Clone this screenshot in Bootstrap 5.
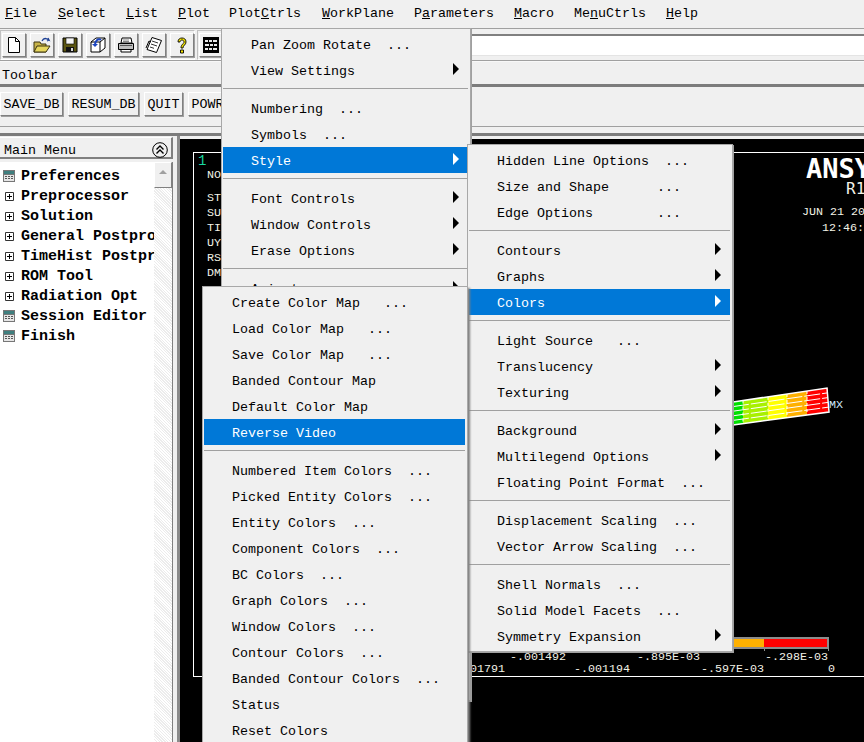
<!DOCTYPE html>
<html lang="en">
<head>
  <meta charset="UTF-8" />
  <meta name="viewport" content="width=device-width, initial-scale=1.0" />
  <title>ANSYS Main Window</title>
  <link href="https://cdn.jsdelivr.net/npm/bootstrap@5.3.0/dist/css/bootstrap.min.css" rel="stylesheet" />
  <script src="https://cdn.jsdelivr.net/npm/bootstrap@5.3.0/dist/js/bootstrap.bundle.min.js"></script>

  <style>
    html, body { margin: 0; height: 742px; overflow: hidden; background: #f0f0f0; }

    .app {
      position: relative;
      width: 864px;
      height: 742px;
      overflow: hidden;
      background: #f0f0f0;
      color: #000;
      font: 13.33px/1 "Liberation Mono", monospace;
    }

    /* Menu bar */
    .menu-strip { height: 29px; flex: none; border-bottom: 1px solid #a0a0a0; }
    .menu-strip span { position: absolute; top: 7px; white-space: pre; }

    /* Icon toolbar */
    .tool-strip { height: 32px; flex: none; padding-top: 1px; border-bottom: 1px solid #a0a0a0; }
    .tool-group {
      height: 30px;
      padding: 2px 0 0 1px;
      border: 1px solid #c0c0c0;
      border-right-color: #fff;
      border-bottom-color: #fff;
      gap: 4px;
      margin-right: 2px;
    }
    .tool-btn {
      width: 24px;
      height: 24px;
      padding: 0;
      border-radius: 0;
      background: #f0f0f0;
      border: 1px solid;
      border-color: #fff #808080 #808080 #fff;
      box-shadow: 1px 1px 0 #a0a0a0;
    }
    .command-box {
      margin: 4px 0 0 0;
      height: 22px;
      background: #fff;
      border-top: 2px solid #808080;
      border-bottom: 1px solid #e4e4e4;
    }

    .toolbar-title {
      height: 26px;
      flex: none;
      padding: 7px 0 0 2px;
      border-top: 1px solid #f8f8f8;
      border-bottom: 3px solid #7c7c7c;
    }

    /* Abbreviation buttons */
    .abbr-strip { height: 40px; flex: none; padding: 5px 0 0 0; gap: 5px; border-bottom: 1px solid #a0a0a0; }
    .abbr-btn {
      height: 24px;
      padding: 1px 2.5px 0;
      border-radius: 0;
      font: inherit;
      color: #000;
      background: #f0f0f0;
      border: 1px solid;
      border-color: #fff #808080 #808080 #fff;
      box-shadow: 1px 1px 0 #a0a0a0;
      white-space: nowrap;
    }
    .abbr-btn:hover { background: #f0f0f0; color: #000; }

    .work-area { flex: 1; min-height: 0; border-top: 3px solid #7c7c7c; margin-top: 6px; }

    /* Main menu tree */
    .side-panel { width: 180px; flex: none; border-right: 3px solid #8a8a8a; padding-right: 4px; }
    .side-head {
      height: 22px;
      margin-top: 1px;
      padding: 6px 0 0 4px;
      width: 173px;
      border-right: 2px solid #808080;
      border-bottom: 2px solid #808080;
      border-top: 1px solid #fff;
    }
    .collapse-knob {
      position: absolute;
      left: 152px;
      top: 4px;
      width: 16px;
      height: 16px;
    }
    .tree-box {
      width: 173px;
      height: 582px;
      margin-top: 3px;
      background: #fff;
      border-right: 1px solid #808080;
    }
    .tree-list { width: 154px; padding-top: 5px; overflow: hidden; }
    .tree-list .list-group-item {
      height: 20px;
      padding: 0;
      border: 0;
      background: transparent;
      font: bold 15px/20px "Liberation Mono", monospace;
      color: #000;
      white-space: nowrap;
      overflow: hidden;
    }
    .tree-ico { width: 21px; flex: none; padding-left: 3px; }
    .plus-ico { padding-left: 5px; }
    .tree-track {
      width: 18px;
      flex: none;
      background-color: #f6f6f6;
      background-image: repeating-linear-gradient(45deg, #fff 0 1px, #ececec 1px 2px);
    }
    .track-up {
      height: 26px;
      background: #f0f0f0;
      border: 1px solid;
      border-color: #fff #808080 #808080 #fff;
    }
    .track-up i {
      display: block;
      width: 0;
      margin: 7px auto 0;
      border: 4px solid transparent;
      border-top: 0;
      border-bottom: 4px solid #a0a0a0;
    }

    /* Graphics window */
    .plot-canvas {
      position: relative;
      flex: 1;
      margin-top: 3px;
      background: #000;
      color: #f2f2e6;
      overflow: hidden;
    }
    .plot-frame {
      position: absolute;
      left: 13px;
      top: 13px;
      width: 720px;
      height: 525px;
      border: 1px solid #fff;
    }
    .plot-text { position: absolute; white-space: pre; font-size: 11.67px; }
    .brand-name { left: 626px; top: 16px; font: bold 27px/1 "DejaVu Sans Mono", monospace; color: #fff; }
    .brand-rel { left: 666px; top: 42px; font: 16px/1 "DejaVu Sans Mono", monospace; }
    .plot-legend-bar {
      position: absolute;
      left: 553px;
      top: 498px;
      width: 96px;
      height: 12px;
      border: solid #8c8c8c;
      border-width: 2px 2px 2px 0;
      background: linear-gradient(to right, #ffb000 0 31px, #f00 31px);
    }
    .plot-legend-bar::after {
      content: "";
      position: absolute;
      left: 31px;
      right: -2px;
      top: 10px;
      height: 2px;
      border: solid #8c8c8c;
      border-width: 0 1px;
    }

    /* Pop-up menus */
    .pop-menu {
      --bs-dropdown-link-active-bg: #0078d7;
      --bs-dropdown-link-active-color: #fff;
      --bs-dropdown-link-color: #000;
      --bs-dropdown-link-hover-bg: #f0f0f0;
      position: absolute;
      margin: 0;
      padding: 2px 2px 2px 1px;
      min-width: 0;
      font: inherit;
      color: #000;
      background: #f0f0f0;
      border: 1px solid #a8a8a8;
      border-radius: 0;
      box-shadow: 1px 1px 0 #a0a0a0;
      overflow: hidden;
    }
    .menu-plot { left: 221px; top: 28px; width: 250px; height: 673px; z-index: 1; }
    .menu-style { left: 467px; top: 144px; width: 266px; height: 508px; z-index: 2; }
    .menu-colors { left: 202px; top: 286px; width: 266px; height: 470px; z-index: 3; box-shadow: 2px 2px 2px #808080; }
    .pop-menu .dropdown-item {
      height: 26px;
      padding: 3px 9px 0 28px;
      white-space: pre;
      border-radius: 0;
    }
    .pop-menu .dropdown-divider {
      margin: 5px 0 6px;
      height: 0;
      opacity: 1;
      border-top: 1px solid #a0a0a0;
    }
    .sub-arrow {
      margin-left: auto;
      margin-top: -6px;
      width: 0;
      height: 0;
      border-style: solid;
      border-width: 6px 0 6px 6px;
      border-color: transparent transparent transparent #000;
    }
    .dropdown-item.active .sub-arrow { border-left-color: #fff; }
  </style>
</head>
<body>

<div class="app d-flex flex-column">
  <!-- Menu bar -->
  <div class="menu-strip">
    <span style="left:5px"><u>F</u>ile</span>
    <span style="left:58px"><u>S</u>elect</span>
    <span style="left:126px"><u>L</u>ist</span>
    <span style="left:178px"><u>P</u>lot</span>
    <span style="left:229px">Plot<u>C</u>trls</span>
    <span style="left:322px"><u>W</u>orkPlane</span>
    <span style="left:414px">P<u>a</u>rameters</span>
    <span style="left:514px"><u>M</u>acro</span>
    <span style="left:574px">Me<u>n</u>uCtrls</span>
    <span style="left:666px"><u>H</u>elp</span>
  </div>

  <!-- Icon toolbar -->
  <div class="tool-strip d-flex">
    <div class="tool-group d-flex">
      <button class="tool-btn btn d-flex align-items-center justify-content-center">
        <svg width="14" height="18" viewBox="0 0 14 18"><path d="M1.5 1.5h7l4 4v11h-11z" fill="#fff" stroke="#000"/><path d="M8.5 1.5v4h4" fill="none" stroke="#000"/></svg>
      </button>
      <button class="tool-btn btn d-flex align-items-center justify-content-center">
        <svg width="18" height="16" viewBox="0 0 18 16"><path d="M1 5h6l1 2h5v8H1z" fill="#c8b44a" stroke="#3c3410"/><path d="M1 15l3-6h13l-4 6z" fill="#e6d65e" stroke="#3c3410"/><path d="M9 4c1-2 3-3 5-2l2 1-1-2m1 2-2 1" fill="none" stroke="#1c3f94" stroke-width="1.3"/></svg>
      </button>
      <button class="tool-btn btn d-flex align-items-center justify-content-center">
        <svg width="16" height="16" viewBox="0 0 16 16"><path d="M1 1h14v14H1z" fill="#5a5410" stroke="#000"/><path d="M4 1h8v6H4z" fill="#f4f4f4" stroke="#000" stroke-width=".6"/><path d="M4 10h8v5H4z" fill="#111"/><path d="M9 11h2v3H9z" fill="#d8d8d8"/></svg>
      </button>
      <button class="tool-btn btn d-flex align-items-center justify-content-center">
        <svg width="18" height="18" viewBox="0 0 18 18"><path d="M2 6l5-4h9v10l-5 4H2z" fill="#fff" stroke="#000"/><path d="M2 6h9v10M11 6l5-4" fill="none" stroke="#000"/><path d="M6 9c0-4 3-7 6-5" fill="none" stroke="#1c45c0" stroke-width="2"/><path d="M3 8l3 3 3-3" fill="#1c45c0"/></svg>
      </button>
      <button class="tool-btn btn d-flex align-items-center justify-content-center">
        <svg width="18" height="16" viewBox="0 0 18 16"><path d="M5 1h9l1 5H4z" fill="#fff" stroke="#000"/><path d="M1.500 6.500h15v6h-15z" fill="#bdbdbd" stroke="#000"/><path d="M4 12.500h10v2.500H4z" fill="#fff" stroke="#000"/><path d="M3 8.500h12" stroke="#555"/><path d="M6 3h6M6 4.500h6" stroke="#555" stroke-width=".7"/></svg>
      </button>
      <button class="tool-btn btn d-flex align-items-center justify-content-center">
        <svg width="18" height="18" viewBox="0 0 18 18"><path d="M7 1.500l9.500 3-5 12-9.500-3z" fill="#fff" stroke="#000"/><path d="M7 5l6 2M6 8l6 2M5 11l4 1.300" stroke="#333"/><path d="M1 12l3-7 2 1" fill="none" stroke="#000"/></svg>
      </button>
      <button class="tool-btn btn d-flex align-items-center justify-content-center">
        <svg width="12" height="17" viewBox="0 0 12 17"><path d="M2 5c0-3 2-4 4-4s4 1 4 4-3 3-3 6H5c0-4 3-4 3-6 0-1-1-2-2-2S4 4 4 5z" fill="#f4e400" stroke="#000" stroke-width=".9"/><path d="M4.500 13h3v3h-3z" fill="#f4e400" stroke="#000" stroke-width=".9"/></svg>
      </button>
    </div>
    <div class="tool-group d-flex">
      <button class="tool-btn btn d-flex align-items-center justify-content-center">
        <svg width="16" height="16" viewBox="0 0 16 16"><path d="M0 0h16v16H0z"/><path d="M2 3h3v2H2zM6 3h3v2H6zM10 3h4v2h-4zM2 7h4v2H2zM7 7h3v2H7zM11 7h3v2h-3zM2 11h3v2H2zM6 11h3v2H6zM10 11h4v2h-4z" fill="#e8e8e8"/></svg>
      </button>
    </div>
    <div class="command-box flex-grow-1"></div>
  </div>

  <div class="toolbar-title">Toolbar</div>

  <!-- Abbreviation buttons -->
  <div class="abbr-strip d-flex align-items-start">
    <button class="abbr-btn btn">SAVE_DB</button>
    <button class="abbr-btn btn">RESUM_DB</button>
    <button class="abbr-btn btn">QUIT</button>
    <button class="abbr-btn btn">POWRGRPH</button>
  </div>

  <div class="work-area d-flex">
    <!-- Main menu tree -->
    <div class="side-panel">
      <div class="side-head position-relative">
        Main Menu
        <svg class="collapse-knob" viewBox="0 0 16 16"><circle cx="8" cy="8" r="7.300" fill="#f0f0f0" stroke="#000"/><path d="M4.500 7.500L8 4l3.500 3.500M4.500 11.500L8 8l3.500 3.500" fill="none" stroke="#000" stroke-width="1.400"/></svg>
      </div>
      <div class="tree-box d-flex">
        <div class="tree-list list-group list-group-flush">
          <div class="list-group-item d-flex align-items-center"><span class="tree-ico"><svg width="12" height="12" viewBox="0 0 12 12"><path d="M0 0h12v12H0z" fill="#777"/><path d="M1 1h10v3H1z" fill="#3f7f7f"/><path d="M1 5h10v6H1z" fill="#e6e6e6"/><path d="M2 6h2v1H2zM5 6h2v1H5zM8 6h2v1H8zM2 8h2v1H2zM5 8h2v1H5zM8 8h2v1H8z" fill="#555"/></svg></span>Preferences</div>
          <div class="list-group-item d-flex align-items-center"><span class="tree-ico plus-ico"><svg width="9" height="9" viewBox="0 0 9 9"><path d="M.5.500h8v8h-8z" fill="#fff" stroke="#333"/><path d="M2 4.500h5M4.500 2v5" stroke="#000"/></svg></span>Preprocessor</div>
          <div class="list-group-item d-flex align-items-center"><span class="tree-ico plus-ico"><svg width="9" height="9" viewBox="0 0 9 9"><path d="M.5.500h8v8h-8z" fill="#fff" stroke="#333"/><path d="M2 4.500h5M4.500 2v5" stroke="#000"/></svg></span>Solution</div>
          <div class="list-group-item d-flex align-items-center"><span class="tree-ico plus-ico"><svg width="9" height="9" viewBox="0 0 9 9"><path d="M.5.500h8v8h-8z" fill="#fff" stroke="#333"/><path d="M2 4.500h5M4.500 2v5" stroke="#000"/></svg></span>General Postproc</div>
          <div class="list-group-item d-flex align-items-center"><span class="tree-ico plus-ico"><svg width="9" height="9" viewBox="0 0 9 9"><path d="M.5.500h8v8h-8z" fill="#fff" stroke="#333"/><path d="M2 4.500h5M4.500 2v5" stroke="#000"/></svg></span>TimeHist Postpro</div>
          <div class="list-group-item d-flex align-items-center"><span class="tree-ico plus-ico"><svg width="9" height="9" viewBox="0 0 9 9"><path d="M.5.500h8v8h-8z" fill="#fff" stroke="#333"/><path d="M2 4.500h5M4.500 2v5" stroke="#000"/></svg></span>ROM Tool</div>
          <div class="list-group-item d-flex align-items-center"><span class="tree-ico plus-ico"><svg width="9" height="9" viewBox="0 0 9 9"><path d="M.5.500h8v8h-8z" fill="#fff" stroke="#333"/><path d="M2 4.500h5M4.500 2v5" stroke="#000"/></svg></span>Radiation Opt</div>
          <div class="list-group-item d-flex align-items-center"><span class="tree-ico"><svg width="12" height="12" viewBox="0 0 12 12"><path d="M0 0h12v12H0z" fill="#777"/><path d="M1 1h10v3H1z" fill="#3f7f7f"/><path d="M1 5h10v6H1z" fill="#e6e6e6"/><path d="M2 6h2v1H2zM5 6h2v1H5zM8 6h2v1H8zM2 8h2v1H2zM5 8h2v1H5zM8 8h2v1H8z" fill="#555"/></svg></span>Session Editor</div>
          <div class="list-group-item d-flex align-items-center"><span class="tree-ico"><svg width="12" height="12" viewBox="0 0 12 12"><path d="M0 0h12v12H0z" fill="#777"/><path d="M1 1h10v3H1z" fill="#3f7f7f"/><path d="M1 5h10v6H1z" fill="#e6e6e6"/><path d="M2 6h2v1H2zM5 6h2v1H5zM8 6h2v1H8zM2 8h2v1H2zM5 8h2v1H5zM8 8h2v1H8z" fill="#555"/></svg></span>Finish</div>
        </div>
        <div class="tree-track"><div class="track-up"><i></i></div></div>
      </div>
    </div>

    <!-- Graphics window -->
    <div class="plot-canvas">
      <div class="plot-frame"></div>
      <span class="plot-text" style="left:18px;top:15px;color:#19d8a0;font-size:14px">1</span>
      <span class="plot-text" style="left:27px;top:31px">NODAL SOLUTION</span>
      <span class="plot-text" style="left:27px;top:54px">STEP=1</span>
      <span class="plot-text" style="left:27px;top:69px">SUB =1</span>
      <span class="plot-text" style="left:27px;top:84px">TIME=1</span>
      <span class="plot-text" style="left:27px;top:99px">UY   (AVG)</span>
      <span class="plot-text" style="left:27px;top:114px">RSYS=0</span>
      <span class="plot-text" style="left:27px;top:129px">DMX =.002086</span>
      <span class="plot-text brand-name">ANSYS</span>
      <span class="plot-text brand-rel">R15</span>
      <span class="plot-text" style="left:622px;top:68px">JUN 21 2016</span>
      <span class="plot-text" style="left:642px;top:84px">12:46:07</span>

      <!-- Deformed beam -->
      <svg class="position-absolute" style="left:550px;top:246px" width="100" height="45" viewBox="0 0 100 45">
        <path d="M3 17L13 15.500V38.600L3 40z" fill="#00e000"/>
        <path d="M13 15.500L38 11.800V35.300L13 38.600z" fill="#a8f000"/>
        <path d="M38 11.800L57 9V32.700L38 35.300z" fill="#ffff00"/>
        <path d="M57 9L77 6V30L57 32.700z" fill="#ffb000"/>
        <path d="M77 6L98 3V27L77 30z" fill="#ff0000"/>
        <path d="M3 21.600L98 7.800M3 26.200L98 12.600M3 30.800L98 17.400M3 35.400L98 22.200" stroke="#fff" stroke-dasharray="16 2"/>
        <path d="M13 15.500V38.600M38 11.800V35.300M57 9V32.700M77 6V30" stroke="#fff" stroke-dasharray="3 3"/>
        <path d="M3 17L97 3L99 27L3 40" fill="none" stroke="#fff" stroke-width="1.500"/>
      </svg>
      <span class="plot-text" style="left:649px;top:261px;color:#cfe8ff">MX</span>

      <!-- Contour legend -->
      <div class="plot-legend-bar"></div>
      <span class="plot-text" style="left:330px;top:513px">-.001492</span>
      <span class="plot-text" style="left:457px;top:513px">-.895E-03</span>
      <span class="plot-text" style="left:585px;top:513px">-.298E-03</span>
      <span class="plot-text" style="left:269px;top:525px">-.001791</span>
      <span class="plot-text" style="left:394px;top:525px">-.001194</span>
      <span class="plot-text" style="left:521px;top:525px">-.597E-03</span>
      <span class="plot-text" style="left:648px;top:525px">0</span>
    </div>
  </div>

  <!-- PlotCtrls menu -->
  <div class="pop-menu dropdown-menu show menu-plot">
    <a class="dropdown-item d-flex align-items-center">Pan Zoom Rotate  ...</a>
    <a class="dropdown-item d-flex align-items-center">View Settings<span class="sub-arrow"></span></a>
    <hr class="dropdown-divider">
    <a class="dropdown-item d-flex align-items-center">Numbering  ...</a>
    <a class="dropdown-item d-flex align-items-center">Symbols  ...</a>
    <a class="dropdown-item d-flex align-items-center active">Style<span class="sub-arrow"></span></a>
    <hr class="dropdown-divider">
    <a class="dropdown-item d-flex align-items-center">Font Controls<span class="sub-arrow"></span></a>
    <a class="dropdown-item d-flex align-items-center">Window Controls<span class="sub-arrow"></span></a>
    <a class="dropdown-item d-flex align-items-center">Erase Options<span class="sub-arrow"></span></a>
    <hr class="dropdown-divider">
    <a class="dropdown-item d-flex align-items-center">Animate<span class="sub-arrow"></span></a>
  </div>

  <!-- Style submenu -->
  <div class="pop-menu dropdown-menu show menu-style">
    <a class="dropdown-item d-flex align-items-center">Hidden Line Options  ...</a>
    <a class="dropdown-item d-flex align-items-center">Size and Shape      ...</a>
    <a class="dropdown-item d-flex align-items-center">Edge Options        ...</a>
    <hr class="dropdown-divider">
    <a class="dropdown-item d-flex align-items-center">Contours<span class="sub-arrow"></span></a>
    <a class="dropdown-item d-flex align-items-center">Graphs<span class="sub-arrow"></span></a>
    <a class="dropdown-item d-flex align-items-center active">Colors<span class="sub-arrow"></span></a>
    <hr class="dropdown-divider">
    <a class="dropdown-item d-flex align-items-center">Light Source   ...</a>
    <a class="dropdown-item d-flex align-items-center">Translucency<span class="sub-arrow"></span></a>
    <a class="dropdown-item d-flex align-items-center">Texturing<span class="sub-arrow"></span></a>
    <hr class="dropdown-divider">
    <a class="dropdown-item d-flex align-items-center">Background<span class="sub-arrow"></span></a>
    <a class="dropdown-item d-flex align-items-center">Multilegend Options<span class="sub-arrow"></span></a>
    <a class="dropdown-item d-flex align-items-center">Floating Point Format  ...</a>
    <hr class="dropdown-divider">
    <a class="dropdown-item d-flex align-items-center">Displacement Scaling  ...</a>
    <a class="dropdown-item d-flex align-items-center">Vector Arrow Scaling  ...</a>
    <hr class="dropdown-divider">
    <a class="dropdown-item d-flex align-items-center">Shell Normals  ...</a>
    <a class="dropdown-item d-flex align-items-center">Solid Model Facets  ...</a>
    <a class="dropdown-item d-flex align-items-center">Symmetry Expansion<span class="sub-arrow"></span></a>
  </div>

  <!-- Colors submenu -->
  <div class="pop-menu dropdown-menu show menu-colors">
    <a class="dropdown-item d-flex align-items-center">Create Color Map   ...</a>
    <a class="dropdown-item d-flex align-items-center">Load Color Map   ...</a>
    <a class="dropdown-item d-flex align-items-center">Save Color Map   ...</a>
    <a class="dropdown-item d-flex align-items-center">Banded Contour Map</a>
    <a class="dropdown-item d-flex align-items-center">Default Color Map</a>
    <a class="dropdown-item d-flex align-items-center active">Reverse Video</a>
    <hr class="dropdown-divider">
    <a class="dropdown-item d-flex align-items-center">Numbered Item Colors  ...</a>
    <a class="dropdown-item d-flex align-items-center">Picked Entity Colors  ...</a>
    <a class="dropdown-item d-flex align-items-center">Entity Colors  ...</a>
    <a class="dropdown-item d-flex align-items-center">Component Colors  ...</a>
    <a class="dropdown-item d-flex align-items-center">BC Colors  ...</a>
    <a class="dropdown-item d-flex align-items-center">Graph Colors  ...</a>
    <a class="dropdown-item d-flex align-items-center">Window Colors  ...</a>
    <a class="dropdown-item d-flex align-items-center">Contour Colors  ...</a>
    <a class="dropdown-item d-flex align-items-center">Banded Contour Colors  ...</a>
    <a class="dropdown-item d-flex align-items-center">Status</a>
    <a class="dropdown-item d-flex align-items-center">Reset Colors</a>
  </div>
</div>

</body>
</html>
